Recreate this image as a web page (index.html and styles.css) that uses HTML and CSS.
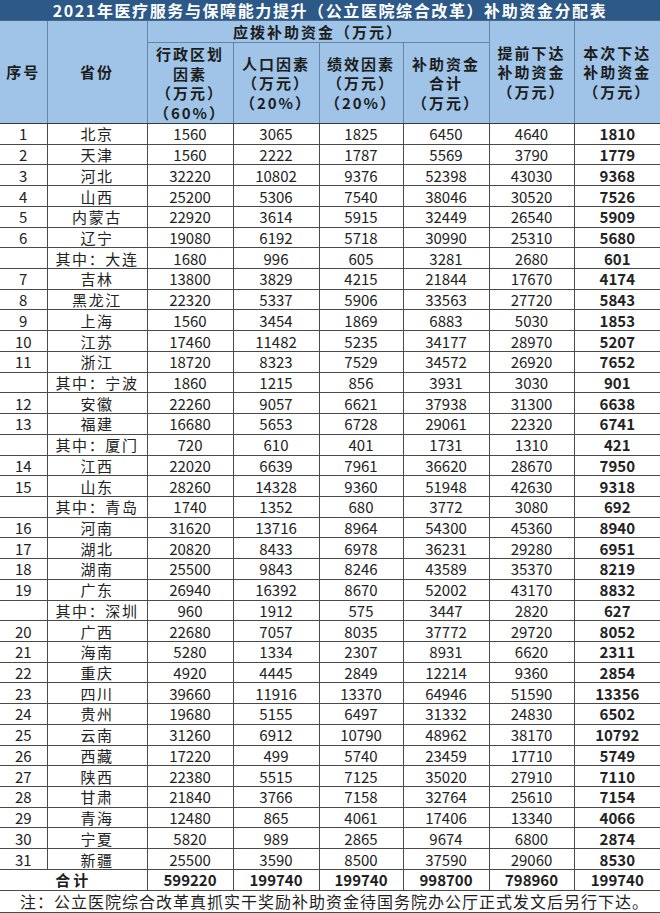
FILE: index.html
```html
<!DOCTYPE html>
<html lang="zh-CN">
<head>
<meta charset="utf-8">
<title>2021年医疗服务与保障能力提升补助资金分配表</title>
<link rel="stylesheet" href="styles.css">
</head>
<body>
<table class="sheet">
<colgroup>
<col class="c-no"><col class="c-prov"><col class="c-a"><col class="c-b"><col class="c-c"><col class="c-d"><col class="c-e"><col class="c-f">
</colgroup>
<thead>
<tr class="r-title"><th colspan="8" class="title">2021年医疗服务与保障能力提升（公立医院综合改革）补助资金分配表</th></tr>
<tr class="r-head1">
<th rowspan="2" class="h">序号</th>
<th rowspan="2" class="h">省份</th>
<th colspan="4" class="h group">应拨补助资金（万元）</th>
<th rowspan="2" class="h">提前下达<br>补助资金<br>（万元）</th>
<th rowspan="2" class="h">本次下达<br>补助资金<br>（万元）</th>
</tr>
<tr class="r-head2">
<th class="h">行政区划<br>因素<br>（万元）<br>（60%）</th>
<th class="h">人口因素<br>（万元）<br>（20%）</th>
<th class="h">绩效因素<br>（万元）<br>（20%）</th>
<th class="h">补助资金<br>合计<br>（万元）</th>
</tr>
</thead>
<tbody>
<tr><td>1</td><td class="p">北京</td><td>1560</td><td>3065</td><td>1825</td><td>6450</td><td>4640</td><td class="b">1810</td></tr>
<tr><td>2</td><td class="p">天津</td><td>1560</td><td>2222</td><td>1787</td><td>5569</td><td>3790</td><td class="b">1779</td></tr>
<tr><td>3</td><td class="p">河北</td><td>32220</td><td>10802</td><td>9376</td><td>52398</td><td>43030</td><td class="b">9368</td></tr>
<tr><td>4</td><td class="p">山西</td><td>25200</td><td>5306</td><td>7540</td><td>38046</td><td>30520</td><td class="b">7526</td></tr>
<tr><td>5</td><td class="p">内蒙古</td><td>22920</td><td>3614</td><td>5915</td><td>32449</td><td>26540</td><td class="b">5909</td></tr>
<tr><td>6</td><td class="p">辽宁</td><td>19080</td><td>6192</td><td>5718</td><td>30990</td><td>25310</td><td class="b">5680</td></tr>
<tr><td></td><td class="p">其中：大连</td><td>1680</td><td>996</td><td>605</td><td>3281</td><td>2680</td><td class="b">601</td></tr>
<tr><td>7</td><td class="p">吉林</td><td>13800</td><td>3829</td><td>4215</td><td>21844</td><td>17670</td><td class="b">4174</td></tr>
<tr><td>8</td><td class="p">黑龙江</td><td>22320</td><td>5337</td><td>5906</td><td>33563</td><td>27720</td><td class="b">5843</td></tr>
<tr><td>9</td><td class="p">上海</td><td>1560</td><td>3454</td><td>1869</td><td>6883</td><td>5030</td><td class="b">1853</td></tr>
<tr><td>10</td><td class="p">江苏</td><td>17460</td><td>11482</td><td>5235</td><td>34177</td><td>28970</td><td class="b">5207</td></tr>
<tr><td>11</td><td class="p">浙江</td><td>18720</td><td>8323</td><td>7529</td><td>34572</td><td>26920</td><td class="b">7652</td></tr>
<tr><td></td><td class="p">其中：宁波</td><td>1860</td><td>1215</td><td>856</td><td>3931</td><td>3030</td><td class="b">901</td></tr>
<tr><td>12</td><td class="p">安徽</td><td>22260</td><td>9057</td><td>6621</td><td>37938</td><td>31300</td><td class="b">6638</td></tr>
<tr><td>13</td><td class="p">福建</td><td>16680</td><td>5653</td><td>6728</td><td>29061</td><td>22320</td><td class="b">6741</td></tr>
<tr><td></td><td class="p">其中：厦门</td><td>720</td><td>610</td><td>401</td><td>1731</td><td>1310</td><td class="b">421</td></tr>
<tr><td>14</td><td class="p">江西</td><td>22020</td><td>6639</td><td>7961</td><td>36620</td><td>28670</td><td class="b">7950</td></tr>
<tr><td>15</td><td class="p">山东</td><td>28260</td><td>14328</td><td>9360</td><td>51948</td><td>42630</td><td class="b">9318</td></tr>
<tr><td></td><td class="p">其中：青岛</td><td>1740</td><td>1352</td><td>680</td><td>3772</td><td>3080</td><td class="b">692</td></tr>
<tr><td>16</td><td class="p">河南</td><td>31620</td><td>13716</td><td>8964</td><td>54300</td><td>45360</td><td class="b">8940</td></tr>
<tr><td>17</td><td class="p">湖北</td><td>20820</td><td>8433</td><td>6978</td><td>36231</td><td>29280</td><td class="b">6951</td></tr>
<tr><td>18</td><td class="p">湖南</td><td>25500</td><td>9843</td><td>8246</td><td>43589</td><td>35370</td><td class="b">8219</td></tr>
<tr><td>19</td><td class="p">广东</td><td>26940</td><td>16392</td><td>8670</td><td>52002</td><td>43170</td><td class="b">8832</td></tr>
<tr><td></td><td class="p">其中：深圳</td><td>960</td><td>1912</td><td>575</td><td>3447</td><td>2820</td><td class="b">627</td></tr>
<tr><td>20</td><td class="p">广西</td><td>22680</td><td>7057</td><td>8035</td><td>37772</td><td>29720</td><td class="b">8052</td></tr>
<tr><td>21</td><td class="p">海南</td><td>5280</td><td>1334</td><td>2307</td><td>8931</td><td>6620</td><td class="b">2311</td></tr>
<tr><td>22</td><td class="p">重庆</td><td>4920</td><td>4445</td><td>2849</td><td>12214</td><td>9360</td><td class="b">2854</td></tr>
<tr><td>23</td><td class="p">四川</td><td>39660</td><td>11916</td><td>13370</td><td>64946</td><td>51590</td><td class="b">13356</td></tr>
<tr><td>24</td><td class="p">贵州</td><td>19680</td><td>5155</td><td>6497</td><td>31332</td><td>24830</td><td class="b">6502</td></tr>
<tr><td>25</td><td class="p">云南</td><td>31260</td><td>6912</td><td>10790</td><td>48962</td><td>38170</td><td class="b">10792</td></tr>
<tr><td>26</td><td class="p">西藏</td><td>17220</td><td>499</td><td>5740</td><td>23459</td><td>17710</td><td class="b">5749</td></tr>
<tr><td>27</td><td class="p">陕西</td><td>22380</td><td>5515</td><td>7125</td><td>35020</td><td>27910</td><td class="b">7110</td></tr>
<tr><td>28</td><td class="p">甘肃</td><td>21840</td><td>3766</td><td>7158</td><td>32764</td><td>25610</td><td class="b">7154</td></tr>
<tr><td>29</td><td class="p">青海</td><td>12480</td><td>865</td><td>4061</td><td>17406</td><td>13340</td><td class="b">4066</td></tr>
<tr><td>30</td><td class="p">宁夏</td><td>5820</td><td>989</td><td>2865</td><td>9674</td><td>6800</td><td class="b">2874</td></tr>
<tr><td>31</td><td class="p">新疆</td><td>25500</td><td>3590</td><td>8500</td><td>37590</td><td>29060</td><td class="b">8530</td></tr>
</tbody>
<tfoot>
<tr class="r-total"><td colspan="2" class="b p total-label">合计</td><td class="b">599220</td><td class="b">199740</td><td class="b">199740</td><td class="b">998700</td><td class="b">798960</td><td class="b">199740</td></tr>
<tr class="r-note"><td colspan="8" class="note">注：公立医院综合改革真抓实干奖励补助资金待国务院办公厅正式发文后另行下达。</td></tr>
</tfoot>
</table>
</body>
</html>
```

FILE: styles.css
```css
html, body {
  margin: 0;
  padding: 0;
  background: #ffffff;
}

body {
  font-family: "Noto Sans CJK SC", "Noto Sans", sans-serif;
  color: #1e1e1e;
  width: 660px;
  height: 913px;
  overflow: hidden;
}

.sheet {
  width: 660px;
  border-collapse: collapse;
  table-layout: fixed;
}

.c-no { width: 47px; }
.c-prov { width: 100px; }
.c-a { width: 86px; }
.c-b { width: 86px; }
.c-c { width: 84px; }
.c-d { width: 86px; }
.c-e { width: 85px; }
.c-f { width: 86px; }

.sheet th,
.sheet td {
  padding: 0;
  text-align: center;
  vertical-align: middle;
  border: 1px solid #4a4a4a;
  font-size: 15px;
  overflow: hidden;
  white-space: nowrap;
}

.sheet tr > :first-child { border-left: none; }
.sheet tr > :last-child { border-right: none; }

.r-title { height: 20px; }
.sheet .title {
  background: #2c5987;
  color: #ffffff;
  font-size: 16px;
  font-weight: bold;
  letter-spacing: 1.6px;
  line-height: 20px;
  border-top: none;
  border-bottom: 1px solid #4a6789;
}

.r-head1 { height: 22px; }
.r-head2 { height: 81px; }

.sheet .h {
  background: #9fc4e7;
  font-weight: bold;
  letter-spacing: 2px;
  line-height: 19.5px;
  color: #1c1c1c;
  border-color: #6585a6;
}

.sheet .r-head2 .h,
.sheet .r-head1 .h[rowspan] { border-bottom-color: #3a3a3a; }

.sheet tbody tr { height: 20.72px; }

.sheet tbody td {
  line-height: 19px;
  color: #222222;
}

.sheet .p {
  letter-spacing: 1.6px;
}

.sheet .b {
  font-weight: bold;
}

.r-total { height: 21px; }
.sheet .r-total td { line-height: 19px; }
.sheet .total-label { letter-spacing: 3px; }

.r-note { height: 22px; }
.sheet .note {
  text-align: left;
  padding-left: 20px;
  font-size: 16px;
  letter-spacing: 1px;
  line-height: 20px;
}
```
